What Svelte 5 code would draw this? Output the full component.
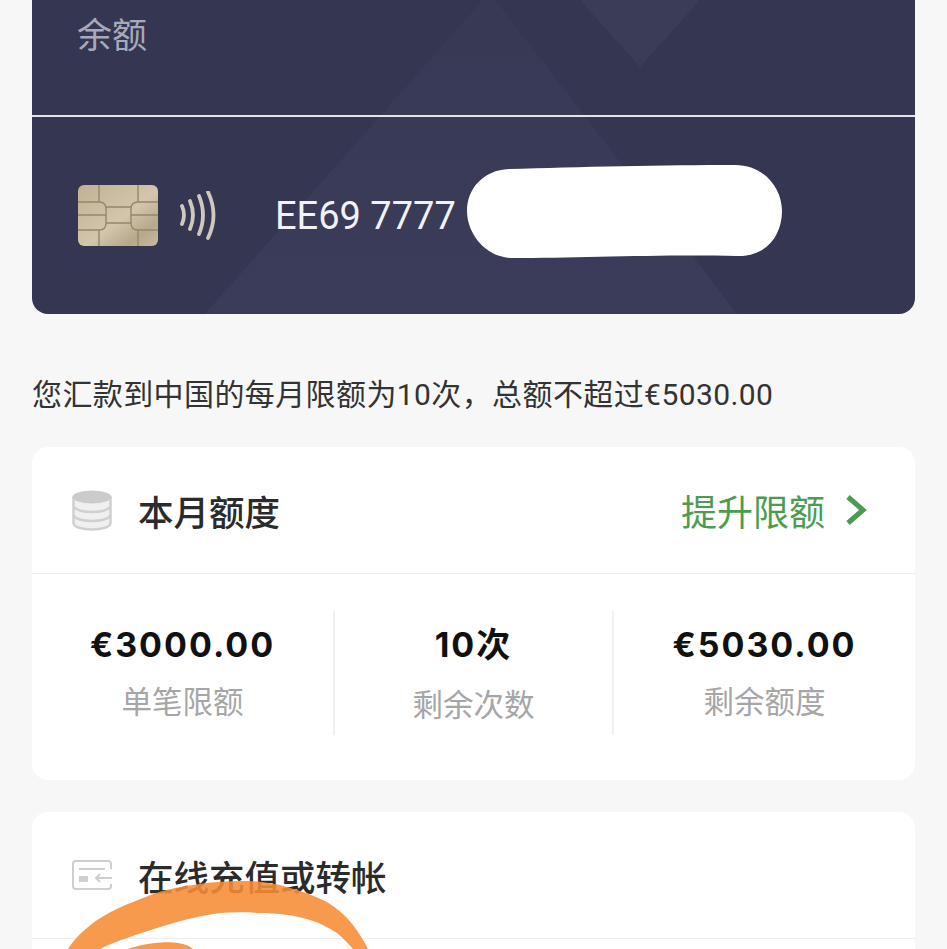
<script>
    const stats = [
        { value: '€3000.00', label: '单笔限额' },
        { value: '10次', label: '剩余次数' },
        { value: '€5030.00', label: '剩余额度' }
    ];
</script>

<div class="page">
    <section class="bank-card">
        <svg class="card-bg" viewBox="0 0 883 314" preserveAspectRatio="none" aria-hidden="true">
            <defs>
                <linearGradient id="peak" x1="0" y1="0" x2="0" y2="1">
                    <stop offset="0" stop-color="#373955" />
                    <stop offset="1" stop-color="#3a3c59" />
                </linearGradient>
            </defs>
            <polygon points="173,314 451,0 463,0 705,314" fill="url(#peak)" />
            <polygon points="548,0 668,0 608,67" fill="#3a3c58" />
        </svg>
        <div class="balance">余额</div>
        <div class="account">
            <svg class="chip" viewBox="0 0 80 61" aria-hidden="true">
                <defs>
                    <linearGradient id="gold" x1="0" y1="0" x2="1" y2="1">
                        <stop offset="0" stop-color="#c0b193" />
                        <stop offset="0.55" stop-color="#d3c6ac" />
                        <stop offset="0.8" stop-color="#b7a88a" />
                        <stop offset="1" stop-color="#c9bba0" />
                    </linearGradient>
                </defs>
                <rect width="80" height="61" rx="6" fill="url(#gold)" />
                <path d="M21 0V17M0 17H21Q28 17 28 24V38Q28 45 21 45H0M0 30H28M21 45V61M28 22H53M28 38H53M60 0V17M80 17H60Q53 17 53 24V38Q53 45 60 45H80M80 30H53M60 45V61" fill="none" stroke="#94876e" stroke-width="1.4" />
            </svg>
            <svg class="nfc" viewBox="0 0 40 50" aria-hidden="true">
                <path d="M4 15Q8 24 4 33M12 10Q18 24 12 38M21 5Q29 24 21 43M30 1Q41 24 30 47" fill="none" stroke="#cfc8bf" stroke-width="3.8" stroke-linecap="round" />
            </svg>
            <span class="iban">EE69 7777</span>
        </div>
        <svg class="redact" viewBox="0 0 315 93" aria-hidden="true">
            <path d="M42 4C110 2 200 0 268 0C298 0 315 24 315 46C315 70 300 92 270 91C200 89 110 93 46 93C18 93 0 68 0 46C0 24 16 5 42 4Z" fill="#fff" />
        </svg>
    </section>

    <p class="notice">您汇款到中国的每月限额为10次，总额不超过€5030.00</p>

    <section class="panel quota">
        <header class="panel-head">
            <svg class="head-icon" viewBox="0 0 40 41" aria-hidden="true">
                <path d="M1.5 8V33C1.5 37 10 39.5 20 39.5S38.5 37 38.5 33V8Z" fill="#f0f0f0" stroke="#d0d0d0" stroke-width="2.5" />
                <ellipse cx="20" cy="7" rx="19.5" ry="6.5" fill="#cbcbcb" />
                <path d="M1.5 17C5 20.5 12 22 20 22S35 20.5 38.5 17M1.5 26C5 29.5 12 31 20 31S35 29.5 38.5 26" fill="none" stroke="#d0d0d0" stroke-width="2.5" />
            </svg>
            <h2>本月额度</h2>
            <a class="raise" href="#raise">
                提升限额
                <svg class="chevron" viewBox="0 0 22 32" aria-hidden="true">
                    <path d="M3 3L18 16L3 29" fill="none" stroke="#4a9d50" stroke-width="5" />
                </svg>
            </a>
        </header>
        <div class="stats">
            {#each stats as stat}
                <div class="stat">
                    <strong>{stat.value}</strong>
                    <span>{stat.label}</span>
                </div>
            {/each}
        </div>
    </section>

    <section class="panel topup">
        <header class="panel-head">
            <svg class="head-icon small" viewBox="0 0 40 30" aria-hidden="true">
                <path d="M39 9V4Q39 1 36 1H4Q1 1 1 4V26Q1 29 4 29H36Q39 29 39 26V24" fill="none" stroke="#cfcfcf" stroke-width="2" />
                <path d="M7 9H33" stroke="#cfcfcf" stroke-width="2" />
                <rect x="7" y="16" width="9" height="6" fill="#cfcfcf" />
                <path d="M40 18H24M28 14L24 18L28 22" fill="none" stroke="#cfcfcf" stroke-width="2" />
            </svg>
            <h2>在线充值或转帐</h2>
        </header>
    </section>

    <svg class="scribble" viewBox="0 0 947 949" aria-hidden="true">
        <path d="M68 949C75 938 84 930 93 923C108 912 125 905 143 898C160 891 176 887 193 885C210 882 226 881 243 881C258 881 273 883 287 887C302 891 315 896 327 902C338 909 346 916 353 925C359 933 364 941 368 949H353C348 943 343 938 337 933C329 928 320 923 310 920C294 915 277 913 260 913C246 912 233 912 220 913C205 915 191 918 177 922C160 927 143 932 127 938C117 941 108 945 100 949Z" fill="#f68d36" />
        <path d="M128 949C142 944 165 941 178 943C185 944 190 946 193 949Z" fill="#f68d36" />
    </svg>
</div>

<style>
    :global(body) {
        margin: 0;
        background: #f7f7f7;
        font-family: 'Roboto', 'Noto Sans CJK SC', sans-serif;
    }

    .page {
        position: relative;
        height: 949px;
        padding: 0 32px;
        box-sizing: border-box;
        overflow: hidden;
    }

    .bank-card {
        position: relative;
        height: 314px;
        background: #343652;
        border-radius: 0 0 16px 16px;
        overflow: hidden;
    }

    .card-bg { position: absolute; inset: 0; width: 100%; height: 100%; }

    .balance {
        position: relative;
        box-sizing: border-box;
        height: 117px;
        padding: 14px 0 0 45px;
        border-bottom: 2px solid #e2e3ec;
        color: #a8a9ba;
        font-size: 35px;
        line-height: 46px;
    }

    .account {
        position: relative;
        display: flex;
        align-items: center;
        height: 197px;
        padding-left: 46px;
    }

    .chip { width: 80px; height: 61px; flex: none; }
    .nfc { width: 40px; height: 50px; flex: none; margin-left: 20px; }

    .iban {
        margin-left: 57px;
        color: #f2f2f6;
        font-size: 38px;
    }

    .redact {
        position: absolute;
        left: 435px;
        top: 165px;
        width: 315px;
        height: 93px;
    }

    .notice {
        margin: 60px 0 32px;
        color: #333;
        font-size: 30px;
        line-height: 41px;
        letter-spacing: 0.4px;
        white-space: nowrap;
    }

    .panel {
        background: #fff;
        border-radius: 16px;
    }

    .quota { height: 333px; }
    .topup { margin-top: 32px; height: 200px; }

    .panel-head {
        display: flex;
        align-items: center;
        height: 127px;
        box-sizing: border-box;
        padding: 0 48px 0 40px;
        border-bottom: 1px solid #eee;
    }

    .head-icon { width: 40px; height: 41px; flex: none; margin-right: 26px; }
    .head-icon.small { height: 30px; }

    h2 {
        margin: 0;
        color: #2b2b2b;
        font-size: 35.5px;
        font-weight: 500;
    }

    .raise {
        display: flex;
        align-items: center;
        margin-left: auto;
        color: #4a9d50;
        font-size: 36px;
        text-decoration: none;
    }

    .chevron { width: 22px; height: 32px; margin-left: 20px; }

    .stats {
        display: grid;
        grid-template-columns: 1fr 281px 1fr;
        padding-top: 37px;
    }

    .stat {
        display: flex;
        flex-direction: column;
        align-items: center;
        height: 124px;
    }

    .stat:nth-child(2) {
        border-left: 2px solid #f0f0f0;
        border-right: 2px solid #f0f0f0;
    }

    .stat strong {
        margin-top: 13px;
        color: #111;
        font-family: 'Inter', 'Noto Sans CJK SC', sans-serif;
        font-size: 34px;
        line-height: 42px;
        letter-spacing: 2px;
    }

    .stat span {
        margin-top: 16px;
        color: #a6a6a6;
        font-size: 30.5px;
        line-height: 42px;
    }

    .stat:nth-child(2) span { margin-top: 19px; }

    .scribble {
        position: absolute;
        left: 0;
        top: 0;
        width: 947px;
        height: 949px;
        opacity: 0.88;
        pointer-events: none;
    }
</style>
